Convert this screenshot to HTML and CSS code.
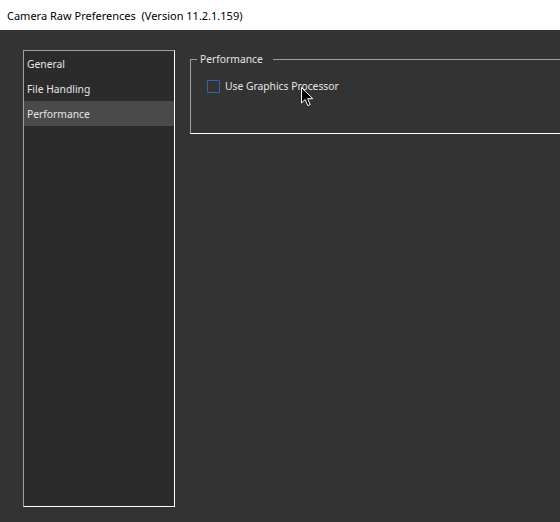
FILE: index.html
```html
<!DOCTYPE html>
<html>
<head>
<meta charset="utf-8">
<link rel="stylesheet" href="styles.css">
</head>
<body>
<div class="titlebar">Camera Raw Preferences&nbsp; (Version 11.2.1.159)</div>
<div class="content">
  <div class="sidebar">
    <div class="item">General</div>
    <div class="item">File Handling</div>
    <div class="item selected">Performance</div>
  </div>
  <fieldset class="group">
    <legend>Performance</legend>
    <label class="check"><span class="box"></span><span class="label-text">Use Graphics Processor</span></label>
  </fieldset>
</div>
<svg class="cursor" width="13" height="20" viewBox="0 0 13 20"><path d="M0.5 0.5 L0.5 16 L4.2 12.5 L6.8 18.6 L9.2 17.6 L6.7 11.7 L11.8 11.7 Z" fill="#000" stroke="#fff" stroke-width="1"/></svg>
</body>
</html>
```
FILE: styles.css
```css
html, body {
  margin: 0;
  padding: 0;
  width: 560px;
  height: 522px;
  overflow: hidden;
  background: #333333;
  font-family: "Noto Sans", "Open Sans", "DejaVu Sans", sans-serif;
  font-size: 10.3px;
}
.titlebar {
  height: 30px;
  background: #ffffff;
  color: #000000;
  display: flex;
  align-items: center;
  padding-left: 7px;
  box-sizing: border-box;
  white-space: nowrap;
  font-size: 11px;
}
.content {
  display: flex;
  align-items: flex-start;
  padding: 20px 0 0 23px;
  gap: 15px;
  overflow: hidden;
}
.sidebar {
  width: 152px;
  height: 457px;
  box-sizing: border-box;
  flex: none;
  background: #2b2b2b;
  border: 1px solid;
  border-color: #a0a0a0 #ffffff #ffffff #a0a0a0;
}
.item {
  height: 25px;
  line-height: 26px;
  padding-left: 3px;
  color: #e6e6e6;
}
.item.selected {
  background: #4a4a4a;
}
.group {
  margin: 1px 0 0 0;
  padding: 0;
  width: 420px;
  height: 83px;
  box-sizing: border-box;
  flex: none;
  border: 1px solid;
  border-color: #a0a0a0 #ffffff #ffffff #a0a0a0;
}
.group legend {
  margin-left: 6px;
  padding: 0 10px 0 3px;
  color: #e6e6e6;
  line-height: 16px;
}
.check {
  display: flex;
  align-items: center;
  margin: 12px 0 0 16px;
  gap: 5px;
  color: #e6e6e6;
}
.box {
  width: 13px;
  height: 13px;
  box-sizing: border-box;
  border: 1px solid #3565a8;
  border-radius: 1px;
}
.cursor {
  position: absolute;
  left: 301px;
  top: 87px;
}
```
